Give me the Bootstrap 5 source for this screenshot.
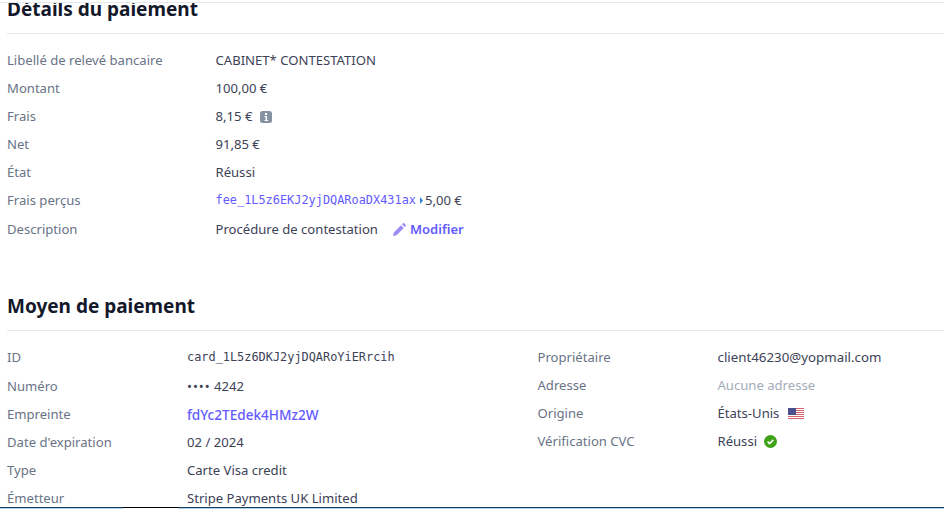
<!DOCTYPE html>
<html lang="fr"><head><meta charset="utf-8"><title>Paiement</title>
<link href="https://cdn.jsdelivr.net/npm/bootstrap@5.3.0/dist/css/bootstrap.min.css" rel="stylesheet">
<style>
html,body{height:100%;overflow:hidden;background:#fff}
body{font-family:"Noto Sans",sans-serif;font-size:13.1px;color:#3c4257;display:flex;flex-direction:column}
.sheet{flex:1 1 auto;min-height:0;overflow:hidden;border-top:1px solid #e3e8ee;margin-top:2px;padding-left:7px}
.sect-title{font-size:19px;font-weight:700;color:#14182b;line-height:28px;margin:-8px 0 0;padding-bottom:10px;border-bottom:1px solid #e3e8ee}
.sect-title.second{margin-top:48px;padding-bottom:10px}
.kv{display:flex;align-items:center;height:28px}
.kv-k{color:#697386}
.first .kv-k{width:208.5px;flex:none}
.left .kv-k{width:180px;flex:none}
.right .kv-k{width:180px;flex:none}
.kv-v{color:#3c4257;display:flex;align-items:center}
.mono{font-family:"DejaVu Sans Mono","Liberation Mono",monospace;font-size:11.9px}
.lnk{color:#635bff;text-decoration:none}
.semi{font-weight:600;font-size:13px;margin-left:15px}
.print{font-size:13.6px;font-weight:500}
.mail{font-size:13.3px}
.dots{letter-spacing:1px}
.muted-v{color:#a3acb9}
.rows-a{padding-top:13px}
.rows-b{padding-top:13px}
.left{width:530.5px;flex:none}
.gap-after{margin-bottom:1px}
.gap-before{margin-top:1px}
.tri{margin:0 2px 0 4px}
.flag{margin-left:9px}
.okmark{margin-left:7px}
.winbar{flex:none;height:2px;background:#a9d3ee;border-top:1px solid #1f3a52;display:flex}
.winbar-seg{display:block;margin-left:123px;width:55px;height:2px;margin-top:-1px;background:#fff;border-top:1px solid #000}
</style></head><body>
<div class="sheet">
<h2 class="sect-title">Détails du paiement</h2>
<div class="first rows-a">
<div class="kv"><div class="kv-k">Libellé de relevé bancaire</div><div class="kv-v">CABINET* CONTESTATION</div></div>
<div class="kv"><div class="kv-k">Montant</div><div class="kv-v">100,00 €</div></div>
<div class="kv"><div class="kv-k">Frais</div><div class="kv-v">8,15 €
<svg class="ms-2" width="12" height="12" viewBox="0 0 12 12"><rect width="12" height="12" rx="2.5" fill="#8792a2"/><rect x="5" y="2" width="2" height="2" fill="#fff"/><path d="M4.5 5h2.5v4h1v1H4.5V9h1V6h-1z" fill="#fff"/></svg></div></div>
<div class="kv"><div class="kv-k">Net</div><div class="kv-v">91,85 €</div></div>
<div class="kv"><div class="kv-k">État</div><div class="kv-v">Réussi</div></div>
<div class="kv"><div class="kv-k">Frais perçus</div><div class="kv-v"><a class="lnk mono" href="#">fee_1L5z6EKJ2yjDQARoaDX431ax</a>
<svg class="tri" width="3" height="7" viewBox="0 0 3 7"><path d="M0 0l3 3.5L0 7z" fill="#2f7fe0"/></svg>5,00 €</div></div>
<div class="kv gap-before"><div class="kv-k">Description</div><div class="kv-v">Procédure de contestation
<a class="lnk semi d-flex align-items-center" href="#"><svg class="me-1" width="13" height="13" viewBox="0 0 13 13"><path d="M0 13l.8-3.6L8 2.2 10.8 5 3.6 12.2zM8.9 1.3 10 .2a.8.8 0 0 1 1.1 0l1.7 1.7a.8.8 0 0 1 0 1.1l-1.1 1.1z" fill="#9c8cf5"/></svg>Modifier</a></div></div>
</div>
<h2 class="sect-title second">Moyen de paiement</h2>
<div class="d-flex rows-b">
<div class="left">
<div class="kv gap-after"><div class="kv-k">ID</div><div class="kv-v mono">card_1L5z6DKJ2yjDQARoYiERrcih</div></div>
<div class="kv"><div class="kv-k">Numéro</div><div class="kv-v"><span class="dots">••••</span>&nbsp;4242</div></div>
<div class="kv"><div class="kv-k">Empreinte</div><div class="kv-v"><a class="lnk print" href="#">fdYc2TEdek4HMz2W</a></div></div>
<div class="kv"><div class="kv-k">Date d'expiration</div><div class="kv-v">02 / 2024</div></div>
<div class="kv"><div class="kv-k">Type</div><div class="kv-v">Carte Visa credit</div></div>
<div class="kv"><div class="kv-k">Émetteur</div><div class="kv-v">Stripe Payments UK Limited</div></div>
</div>
<div class="right flex-grow-1">
<div class="kv"><div class="kv-k">Propriétaire</div><div class="kv-v mail">client46230@yopmail.com</div></div>
<div class="kv"><div class="kv-k">Adresse</div><div class="kv-v muted-v">Aucune adresse</div></div>
<div class="kv"><div class="kv-k">Origine</div><div class="kv-v">États-Unis
<svg class="flag" width="16" height="12" viewBox="0 0 16 12"><rect width="16" height="12" fill="#fff"/><g fill="#d9636b"><rect y="0" width="16" height="1"/><rect y="2" width="16" height="1"/><rect y="4" width="16" height="1"/><rect y="6" width="16" height="1"/><rect y="8" width="16" height="1"/><rect y="10" width="16" height="1"/></g><rect width="8" height="7" fill="#4a4f8f"/></svg></div></div>
<div class="kv"><div class="kv-k">Vérification CVC</div><div class="kv-v">Réussi
<svg class="okmark" width="13" height="13" viewBox="0 0 13 13"><circle cx="6.5" cy="6.5" r="6.5" fill="#3fa118"/><path d="M3.6 6.6l2 2 3.8-3.8" fill="none" stroke="#fff" stroke-width="1.7"/></svg></div></div>
</div>
</div>
</div>
<div class="winbar"><span class="winbar-seg"></span></div>
<script src="https://cdn.jsdelivr.net/npm/bootstrap@5.3.0/dist/js/bootstrap.bundle.min.js"></script>
</body></html>
